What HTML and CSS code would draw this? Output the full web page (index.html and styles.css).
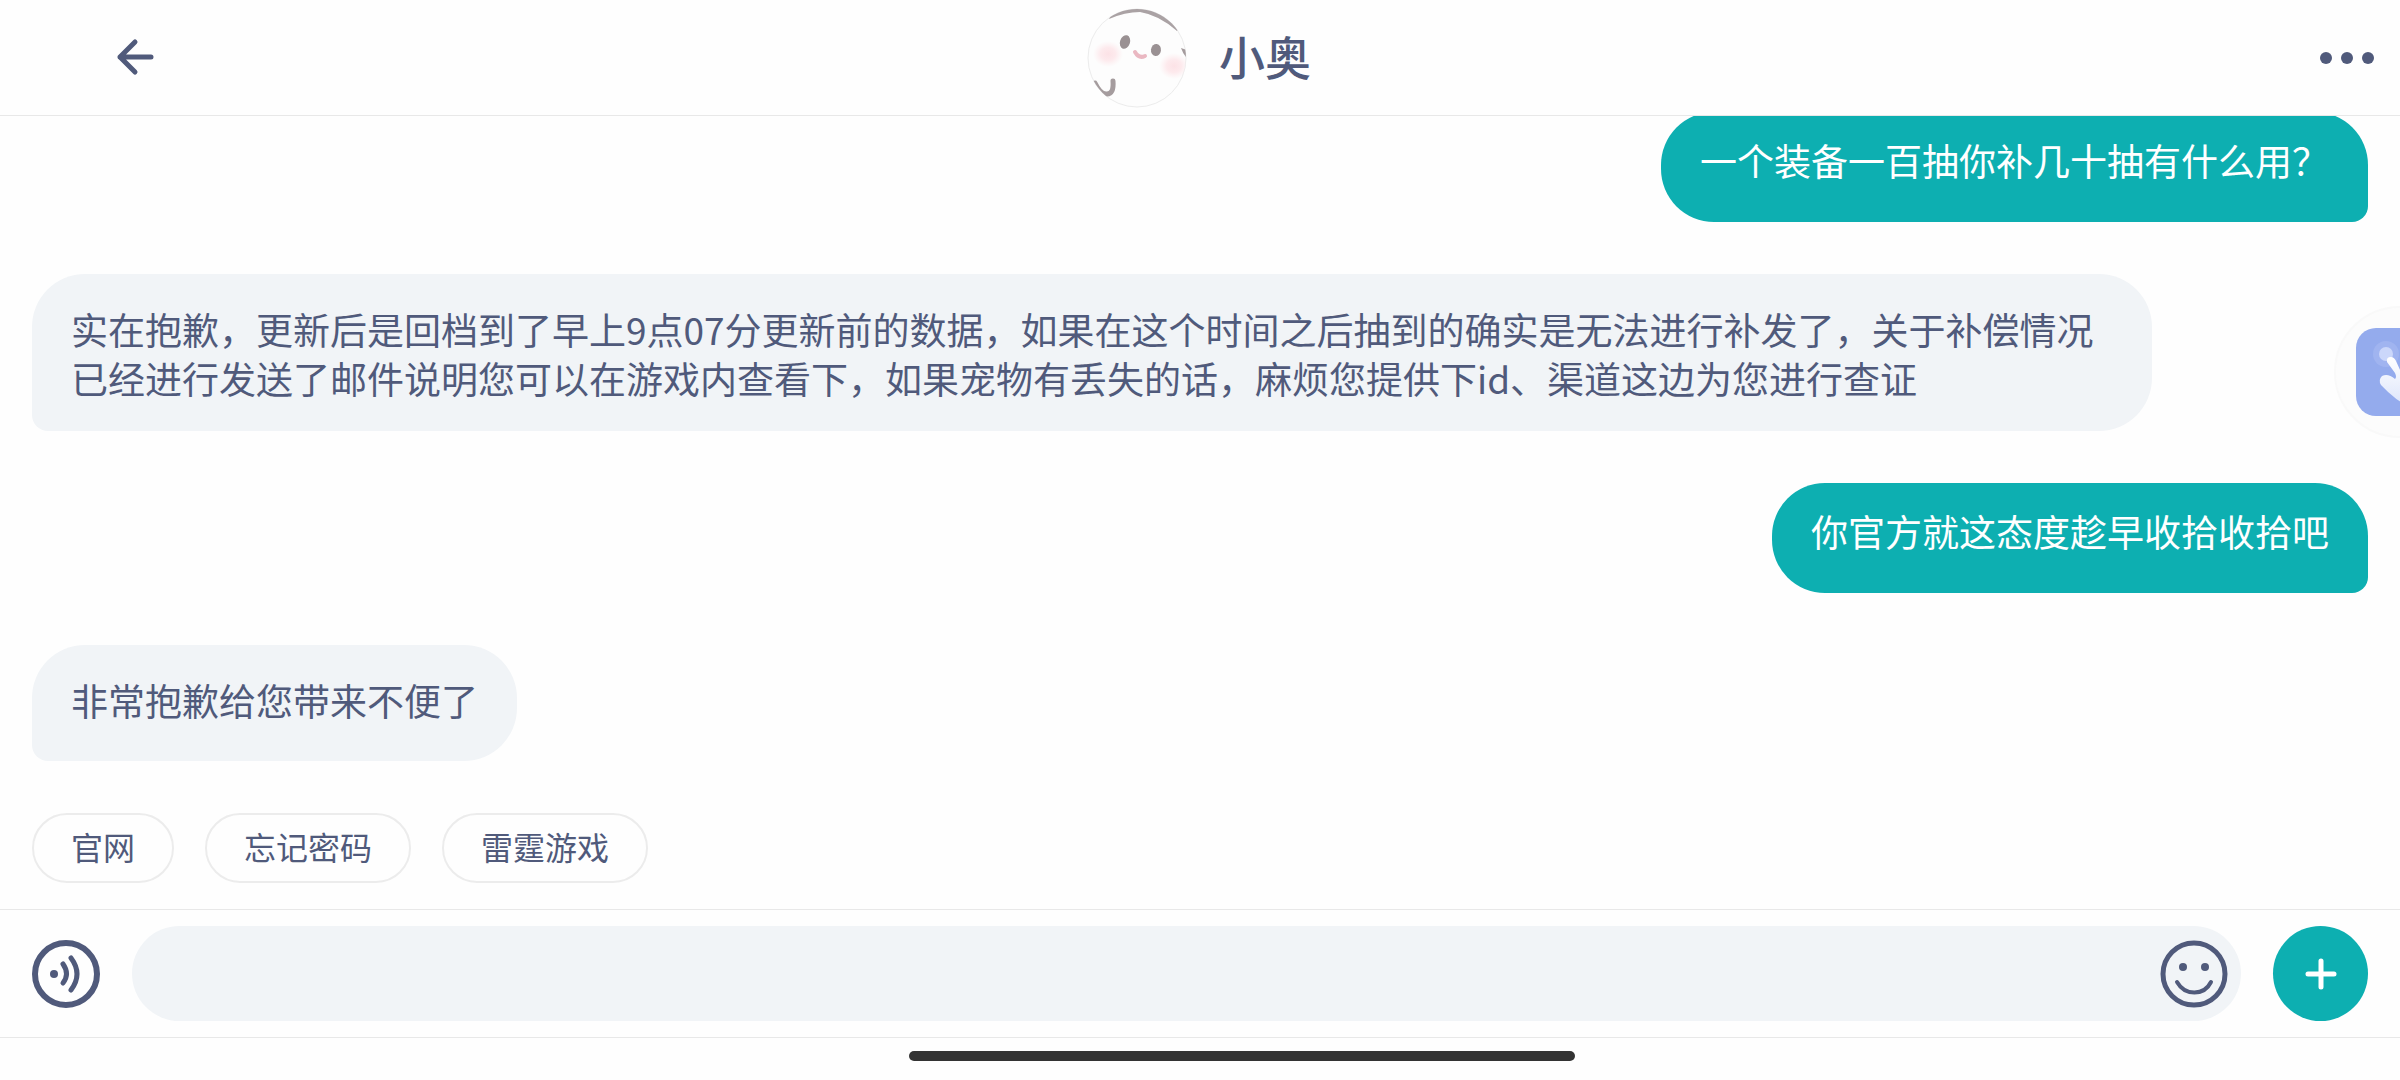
FILE: index.html
```html
<!DOCTYPE html>
<html lang="zh-CN">
<head>
  <meta charset="UTF-8">
  <title>小奥</title>
  <link rel="stylesheet" href="styles.css">
</head>
<body>

  <header class="header">
    <button class="icon-btn back" type="button" aria-label="返回">
      <svg width="40" height="40" viewBox="0 0 40 40">
        <path d="M35 19H4M19 4L4 19l15 15" fill="none" stroke="#505a7b" stroke-width="5" stroke-linecap="round" stroke-linejoin="round"/>
      </svg>
    </button>
    <div class="contact">
      <svg class="avatar" width="100" height="100" viewBox="0 0 100 100">
        <defs>
          <clipPath id="face"><circle cx="50" cy="50" r="49"/></clipPath>
          <radialGradient id="blush">
            <stop offset="0" stop-color="#fce2e6"/>
            <stop offset="0.5" stop-color="#fdeaed"/>
            <stop offset="1" stop-color="#fdeef0" stop-opacity="0"/>
          </radialGradient>
        </defs>
        <circle cx="50" cy="50" r="49" fill="#fdfdfd" stroke="#ececec"/>
        <g clip-path="url(#face)">
          <path d="M22 11Q38 4 53 4Q72 7 90 23L98 12L60-4H30Z" fill="#aaa2a4"/>
          <ellipse cx="21" cy="46" rx="15" ry="13" fill="url(#blush)"/>
          <ellipse cx="87" cy="58" rx="15" ry="13" fill="url(#blush)"/>
          <ellipse cx="38" cy="34" rx="5" ry="7" fill="#9a9193" transform="rotate(18 38 34)"/>
          <ellipse cx="69" cy="42" rx="5" ry="6" fill="#9a9193" transform="rotate(8 69 42)"/>
          <path d="M48 44q4 7 10 4" fill="none" stroke="#eab8c2" stroke-width="4" stroke-linecap="round"/>
          <path d="M26 73q1 13-6 13q-6 1-12-11" fill="none" stroke="#a59c9e" stroke-width="5" stroke-linecap="round"/>
          <path d="M94 40l6 2v8q-4-4-6-10z" fill="#a59c9e"/>
        </g>
      </svg>
      <h1 class="name">小奥</h1>
    </div>
    <button class="icon-btn more" type="button" aria-label="更多">
      <svg width="54" height="12" viewBox="0 0 54 12" fill="#505a7b">
        <circle cx="6" cy="6" r="6"/>
        <circle cx="27" cy="6" r="6"/>
        <circle cx="48" cy="6" r="6"/>
      </svg>
    </button>
  </header>

  <main class="chat">
    <p class="bubble sent">一个装备一百抽你补几十抽有什么用？</p>
    <p class="bubble received">实在抱歉，更新后是回档到了早上9点07分更新前的数据，如果在这个时间之后抽到的确实是无法进行补发了，关于补偿情况已经进行发送了邮件说明您可以在游戏内查看下，如果宠物有丢失的话，麻烦您提供下id、渠道这边为您进行查证</p>
    <p class="bubble sent">你官方就这态度趁早收拾收拾吧</p>
    <p class="bubble received">非常抱歉给您带来不便了</p>
    <nav class="chips">
      <button class="chip" type="button">官网</button>
      <button class="chip" type="button">忘记密码</button>
      <button class="chip" type="button">雷霆游戏</button>
    </nav>
  </main>

  <form class="composer">
    <button class="icon-btn" type="button" aria-label="语音">
      <svg width="68" height="68" viewBox="0 0 68 68" fill="none" stroke="#505a7b" stroke-linecap="round">
        <circle cx="34" cy="34" r="31" stroke-width="6"/>
        <circle cx="22" cy="34" r="4" fill="#505a7b" stroke="none"/>
        <path d="M31 24q7 10 0 19" stroke-width="5"/>
        <path d="M39 18q12 16 0 32" stroke-width="5"/>
      </svg>
    </button>
    <div class="field">
      <input class="message" type="text" aria-label="消息">
      <button class="icon-btn" type="button" aria-label="表情">
        <svg width="68" height="68" viewBox="0 0 68 68" fill="none" stroke="#505a7b" stroke-linecap="round">
          <circle cx="34" cy="34" r="31" stroke-width="5"/>
          <circle cx="23" cy="27" r="4" fill="#505a7b" stroke="none"/>
          <circle cx="45" cy="27" r="4" fill="#505a7b" stroke="none"/>
          <path d="M17 42c8 14 27 14 34 0" stroke-width="4"/>
        </svg>
      </button>
    </div>
    <button class="add" type="button" aria-label="添加">
      <svg width="32" height="32" viewBox="0 0 32 32">
        <path d="M16 3v26M3 16h26" stroke="#fff" stroke-width="5" stroke-linecap="round"/>
      </svg>
    </button>
  </form>

  <footer class="home"><span class="home-bar"></span></footer>

  <!-- floating touch helper, half off the right edge -->
  <button class="floater" type="button" aria-label="快捷助手">
    <svg width="132" height="132" viewBox="0 0 132 132">
      <defs>
        <linearGradient id="hand" x1="0" y1="0" x2="0" y2="1">
          <stop offset="0" stop-color="#fff"/>
          <stop offset="1" stop-color="#dbe4fb"/>
        </linearGradient>
      </defs>
      <circle cx="66" cy="66" r="65" fill="#fcfcfc" stroke="#f9f9f9" stroke-width="2"/>
      <rect x="22" y="22" width="88" height="88" rx="20" fill="#94abed"/>
      <circle cx="52" cy="48" r="13" fill="#a0b4f0"/>
      <circle cx="52" cy="48" r="7" fill="#cbd7fa"/>
      <path d="M53 56q-1-5 4-5q3 0 5 4l14 31v15q-14-6-29-22q-3-5 1-9q6-3 13 3q2-2 0-6z" fill="url(#hand)"/>
    </svg>
  </button>

</body>
</html>
```
FILE: styles.css
```css
* {
  box-sizing: border-box;
}

body {
  margin: 0;
  height: 100vh;
  display: flex;
  flex-direction: column;
  overflow: hidden;
  background-color: #fefefe;
  color: #505a7b;
  font-family: "Noto Sans CJK SC", sans-serif;
}

button {
  padding: 0;
  border: none;
  background: none;
  color: inherit;
  font-family: inherit;
  cursor: pointer;
}

svg {
  display: block;
}

/* header */
.header {
  flex: none;
  display: grid;
  grid-template-columns: 1fr auto 1fr;
  align-items: center;
  height: 116px;
  padding: 0 26px 0 116px;
  border-bottom: 1px solid #e8e8e8;
}

.header .back {
  justify-self: start;
}

.header .more {
  justify-self: end;
}

.contact {
  display: flex;
  align-items: center;
  gap: 32px;
  /* evens out the unequal side padding */
  margin-right: 92px;
}

.name {
  margin: 0;
  padding-bottom: 6px;
  font-size: 46px;
  font-weight: 500;
  line-height: 56px;
}

/* messages */
.chat {
  flex: 1;
  min-height: 0;
  display: flex;
  flex-direction: column;
  justify-content: flex-end;
  gap: 52px;
  padding: 0 32px 26px;
  overflow: hidden;
}

.bubble {
  flex: none;
  max-width: calc(100% - 216px);
  margin: 0;
  font-size: 37px;
  line-height: 49px;
}

.sent {
  align-self: flex-end;
  padding: 24px 39px 37px;
  border-radius: 53px 53px 16px 53px;
  background-color: #0dafb1;
  color: #fff;
}

.received {
  align-self: flex-start;
  min-height: 116px;
  padding: 31px 39px 28px;
  border-radius: 53px 53px 53px 16px;
  background-color: #f1f4f7;
}

.chips {
  flex: none;
  display: flex;
  gap: 31px;
}

.chip {
  height: 70px;
  padding: 0 37px 4px;
  border: 2px solid #ececec;
  border-radius: 35px;
  font-size: 32px;
}

/* input row */
.composer {
  flex: none;
  display: flex;
  align-items: center;
  gap: 32px;
  height: 129px;
  padding: 0 32px;
  border-top: 1px solid #e8e8e8;
  border-bottom: 1px solid #e8e8e8;
}

.field {
  flex: 1;
  display: flex;
  align-items: center;
  height: 95px;
  padding: 0 13px 0 39px;
  border-radius: 48px;
  background-color: #f1f4f7;
}

.message {
  flex: 1;
  min-width: 0;
  border: none;
  outline: none;
  background: none;
  color: inherit;
  font-family: inherit;
  font-size: 37px;
}

.add {
  display: flex;
  align-items: center;
  justify-content: center;
  width: 95px;
  height: 95px;
  border-radius: 50%;
  background-color: #0dafb1;
}

.home {
  flex: none;
  display: flex;
  justify-content: center;
  height: 42px;
  padding: 13px 0 0 84px;
}

.home-bar {
  width: 666px;
  height: 10px;
  border-radius: 5px;
  background-color: #333;
}

.floater {
  position: absolute;
  top: 306px;
  right: -66px;
}
```
